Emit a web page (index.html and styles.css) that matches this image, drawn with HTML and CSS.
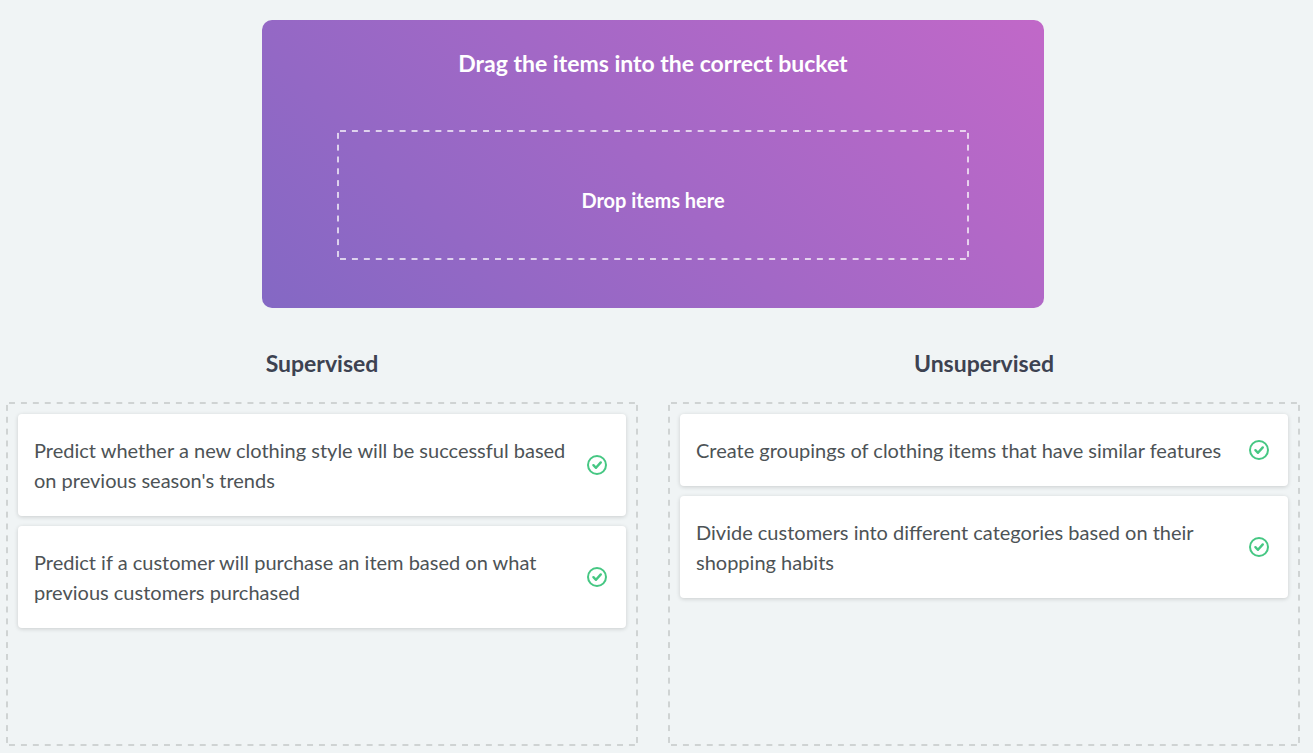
FILE: index.html
```html
<!DOCTYPE html>
<html lang="en">
<head>
<meta charset="utf-8">
<meta name="viewport" content="width=device-width, initial-scale=1">
<title>Drag the items into the correct bucket</title>
<link rel="stylesheet" href="styles.css">
</head>
<body>
<svg class="sprite" aria-hidden="true">
  <symbol id="check" viewBox="0 0 20 20">
    <circle cx="10" cy="10" r="9" fill="none" stroke="currentColor" stroke-width="2"/>
    <path d="M6.4 10.2 9 12.8 13.8 7.4" fill="none" stroke="currentColor" stroke-width="2.4" stroke-linecap="round" stroke-linejoin="round"/>
  </symbol>
</svg>
<main class="exercise">
  <section class="source">
    <h1 class="title">Drag the items into the correct bucket</h1>
    <div class="dropzone dashed">Drop items here</div>
  </section>
  <div class="buckets">
    <section class="column">
      <h2 class="column-title">Supervised</h2>
      <ul class="bucket dashed">
        <li class="card"><span class="card-text">Predict whether a new clothing style will be successful based on previous season's trends</span><svg class="check" role="img" aria-label="Correct"><use href="#check"/></svg></li>
        <li class="card"><span class="card-text">Predict if a customer will purchase an item based on what previous customers purchased</span><svg class="check" role="img" aria-label="Correct"><use href="#check"/></svg></li>
      </ul>
    </section>
    <section class="column">
      <h2 class="column-title">Unsupervised</h2>
      <ul class="bucket dashed">
        <li class="card"><span class="card-text">Create groupings of clothing items that have similar features</span><svg class="check" role="img" aria-label="Correct"><use href="#check"/></svg></li>
        <li class="card"><span class="card-text">Divide customers into different categories based on their shopping habits</span><svg class="check" role="img" aria-label="Correct"><use href="#check"/></svg></li>
      </ul>
    </section>
  </div>
</main>
</body>
</html>
```
FILE: styles.css
```css
* {
  box-sizing: border-box;
}

body {
  margin: 0;
  background: #f0f4f5;
  color: #4d5356;
  font-family: Lato, "Open Sans", sans-serif;
  font-size: 20px;
  line-height: 30px;
}

.sprite {
  display: none;
}

.exercise {
  padding: 20px 13px 7px 6px;
}

.source {
  max-width: 782px;
  margin: 0 auto 40px;
  padding: 28px 75px 48px;
  border-radius: 10px;
  background: linear-gradient(45deg, #8468c4, #c168c8);
  color: #fff;
  text-align: center;
}

.title,
.column-title {
  margin: 0;
  font-size: 23px;
  font-weight: 700;
  line-height: 30px;
  text-align: center;
}

/* Outline of evenly spaced 6px dashes on all four edges */
.dashed {
  --row: linear-gradient(90deg, transparent 25%, var(--dash) 25% 75%, transparent 75%);
  --col: linear-gradient(transparent 25%, var(--dash) 25% 75%, transparent 75%);
  background-image: var(--row), var(--row), var(--col), var(--col);
  background-position: top, bottom, left, right;
  background-repeat: round no-repeat, round no-repeat, no-repeat round, no-repeat round;
  background-size: 12px 2px, 12px 2px, 2px 12px, 2px 12px;
}

.dropzone {
  --dash: rgba(255, 255, 255, 0.7);
  display: flex;
  align-items: center;
  justify-content: center;
  min-height: 130px;
  margin-top: 52px;
  padding-top: 10px;
  font-weight: 700;
}

.buckets {
  display: grid;
  grid-template-columns: repeat(2, minmax(0, 1fr));
  gap: 30px;
}

.column {
  display: flex;
  flex-direction: column;
  gap: 24px;
}

.column-title {
  color: #3d4251;
}

.bucket {
  --dash: #cfd3d3;
  display: flex;
  flex: 1;
  flex-direction: column;
  gap: 10px;
  min-height: 344px;
  margin: 0;
  padding: 12px;
  list-style: none;
}

.card {
  display: flex;
  align-items: center;
  justify-content: space-between;
  gap: 16px;
  padding: 21px 19px 21px 16px;
  border-radius: 4px;
  background: #fff;
  box-shadow: 0 1px 4px rgba(0, 0, 0, 0.16);
}

.check {
  flex: none;
  width: 20px;
  height: 20px;
  color: #46c783;
}
```
